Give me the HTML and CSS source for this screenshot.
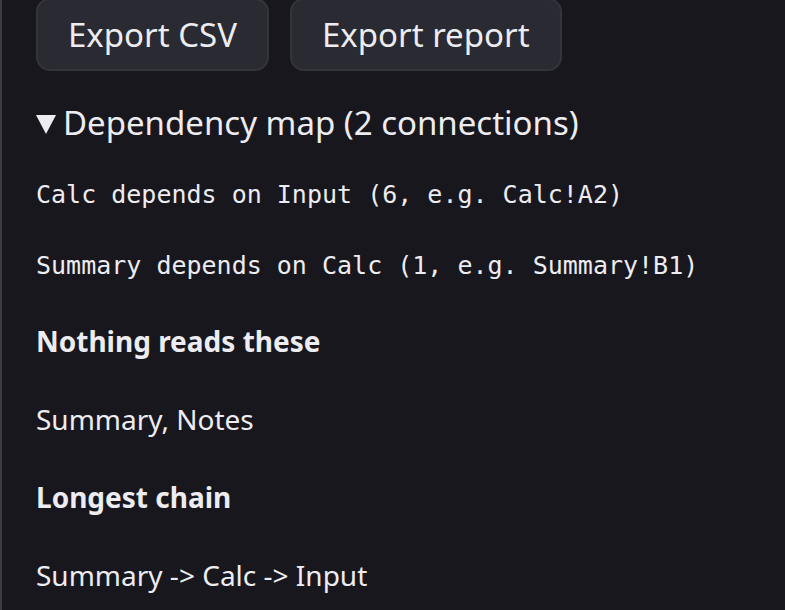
FILE: index.html
```html
<!DOCTYPE html>
<html lang="en">
<head>
    <title>Dependency map</title>
    <link rel="stylesheet" href="styles.css">
</head>
<body>
    <div class="panel">
        <div class="actions">
            <button class="btn">Export CSV</button>
            <button class="btn">Export report</button>
        </div>
        <details class="deps" open>
            <summary>Dependency map (2 connections)</summary>
            <div class="edge">Calc depends on Input (6, e.g. Calc!A2)</div>
            <div class="edge">Summary depends on Calc (1, e.g. Summary!B1)</div>
            <p class="label first">Nothing reads these</p>
            <p>Summary, Notes</p>
            <p class="label">Longest chain</p>
            <p>Summary -&gt; Calc -&gt; Input</p>
        </details>
    </div>
</body>
</html>
```

FILE: styles.css
```css
body {
    margin: 0;
    background-color: #18171d;
    color: #ececf1;
    font-family: "Noto Sans", sans-serif;
    font-size: 28px;
}
.panel {
    border-left: 2px solid #3b3b42;
    padding-left: 34px;
    margin-top: -2px;
    min-height: 620px;
}
.actions {
    display: flex;
    gap: 21px;
}
.btn {
    font-family: inherit;
    font-size: 33px;
    color: #ececf1;
    background-color: #2a2a33;
    border: 2px solid #34343d;
    border-radius: 14px;
    padding: 12px 30px;
}
.deps summary {
    margin-top: 29px;
    font-size: 33px;
    list-style: none;
    cursor: pointer;
}
.deps summary::-webkit-details-marker {
    display: none;
}
.deps summary::before {
    content: "";
    display: inline-block;
    border-left: 10.5px solid transparent;
    border-right: 10.5px solid transparent;
    border-top: 19px solid #ececf1;
    margin-right: 7px;
    vertical-align: 1px;
}
.edge {
    font-family: "DejaVu Sans Mono", monospace;
    font-size: 25px;
    line-height: 29px;
    margin-top: 35px;
}
.edge + .edge {
    margin-top: 42px;
}
.deps p {
    margin: 40px 0 0;
}
.deps p.first {
    margin-top: 42px;
}
.deps .label {
    font-weight: bold;
}
```
